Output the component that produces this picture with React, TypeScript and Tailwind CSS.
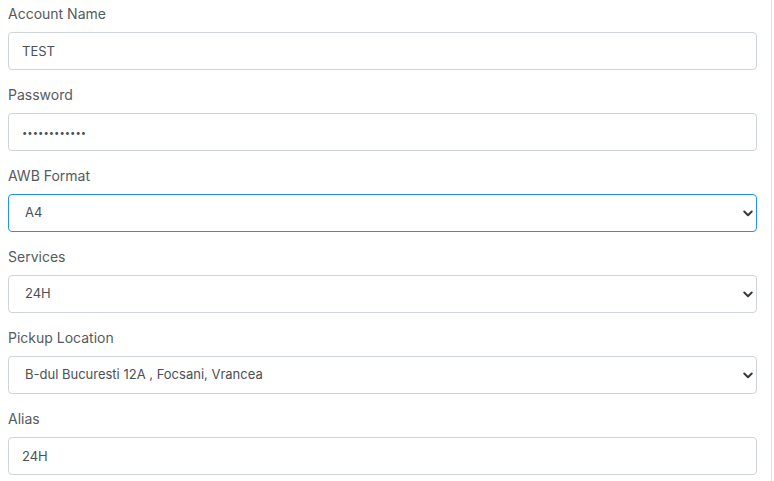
import React from 'react';

const font = { fontFamily: 'Inter, "Noto Sans", sans-serif' };

const Chevron: React.FC = () => (
  <svg
    className="pointer-events-none absolute right-[3px] top-1/2 -translate-y-1/2"
    width="12"
    height="12"
    viewBox="0 0 16 16"
    fill="none"
    stroke="#343a40"
    strokeWidth="2.6"
    strokeLinecap="round"
    strokeLinejoin="round"
  >
    <path d="M3 6l5 5 5-5" />
  </svg>
);

const Label: React.FC<{ text: string }> = ({ text }) => (
  <label className="block text-[14px] leading-[21px] mb-2 text-[#555a60]">{text}</label>
);

const inputCls =
  'block w-full h-[38px] rounded-[4px] border border-[#ced4da] bg-white px-[13px] text-[#495057] outline-none';

const TextField: React.FC<{ label: string; value: string; type?: string }> = ({ label, value, type = 'text' }) => (
  <div className="mb-[14px]">
    <Label text={label} />
    <input
      type={type}
      defaultValue={value}
      className={inputCls + (type === 'password' ? ' text-[9.5px]' : ' text-[13px]')}
      style={font}
    />
  </div>
);

const SelectField: React.FC<{ label: string; value: string; focused?: boolean }> = ({ label, value, focused }) => (
  <div className="mb-[14px]">
    <Label text={label} />
    <div className="relative">
      <select
        defaultValue={value}
        className={
          'block w-full h-[38px] appearance-none rounded-[4px] border bg-white pl-[16px] pr-8 text-[13px] text-[#495057] outline-none ' +
          (focused ? 'border-[#1e90ff]' : 'border-[#ced4da]')
        }
        style={font}
      >
        <option>{value}</option>
      </select>
      <Chevron />
    </div>
  </div>
);

const App: React.FC = () => {
  return (
    <div className="w-[774px] h-[481px] bg-white overflow-hidden" style={font}>
      <div className="w-[772px] h-full border-r border-[#e3e3e3] pl-2 pr-[14px] pt-[3px]">
        <TextField label="Account Name" value="TEST" />
        <TextField label="Password" value="123456789012" type="password" />
        <SelectField label="AWB Format" value="A4" focused />
        <SelectField label="Services" value="24H" />
        <SelectField label="Pickup Location" value="B-dul Bucuresti 12A , Focsani, Vrancea" />
        <TextField label="Alias" value="24H" />
      </div>
    </div>
  );
};

export default App;
